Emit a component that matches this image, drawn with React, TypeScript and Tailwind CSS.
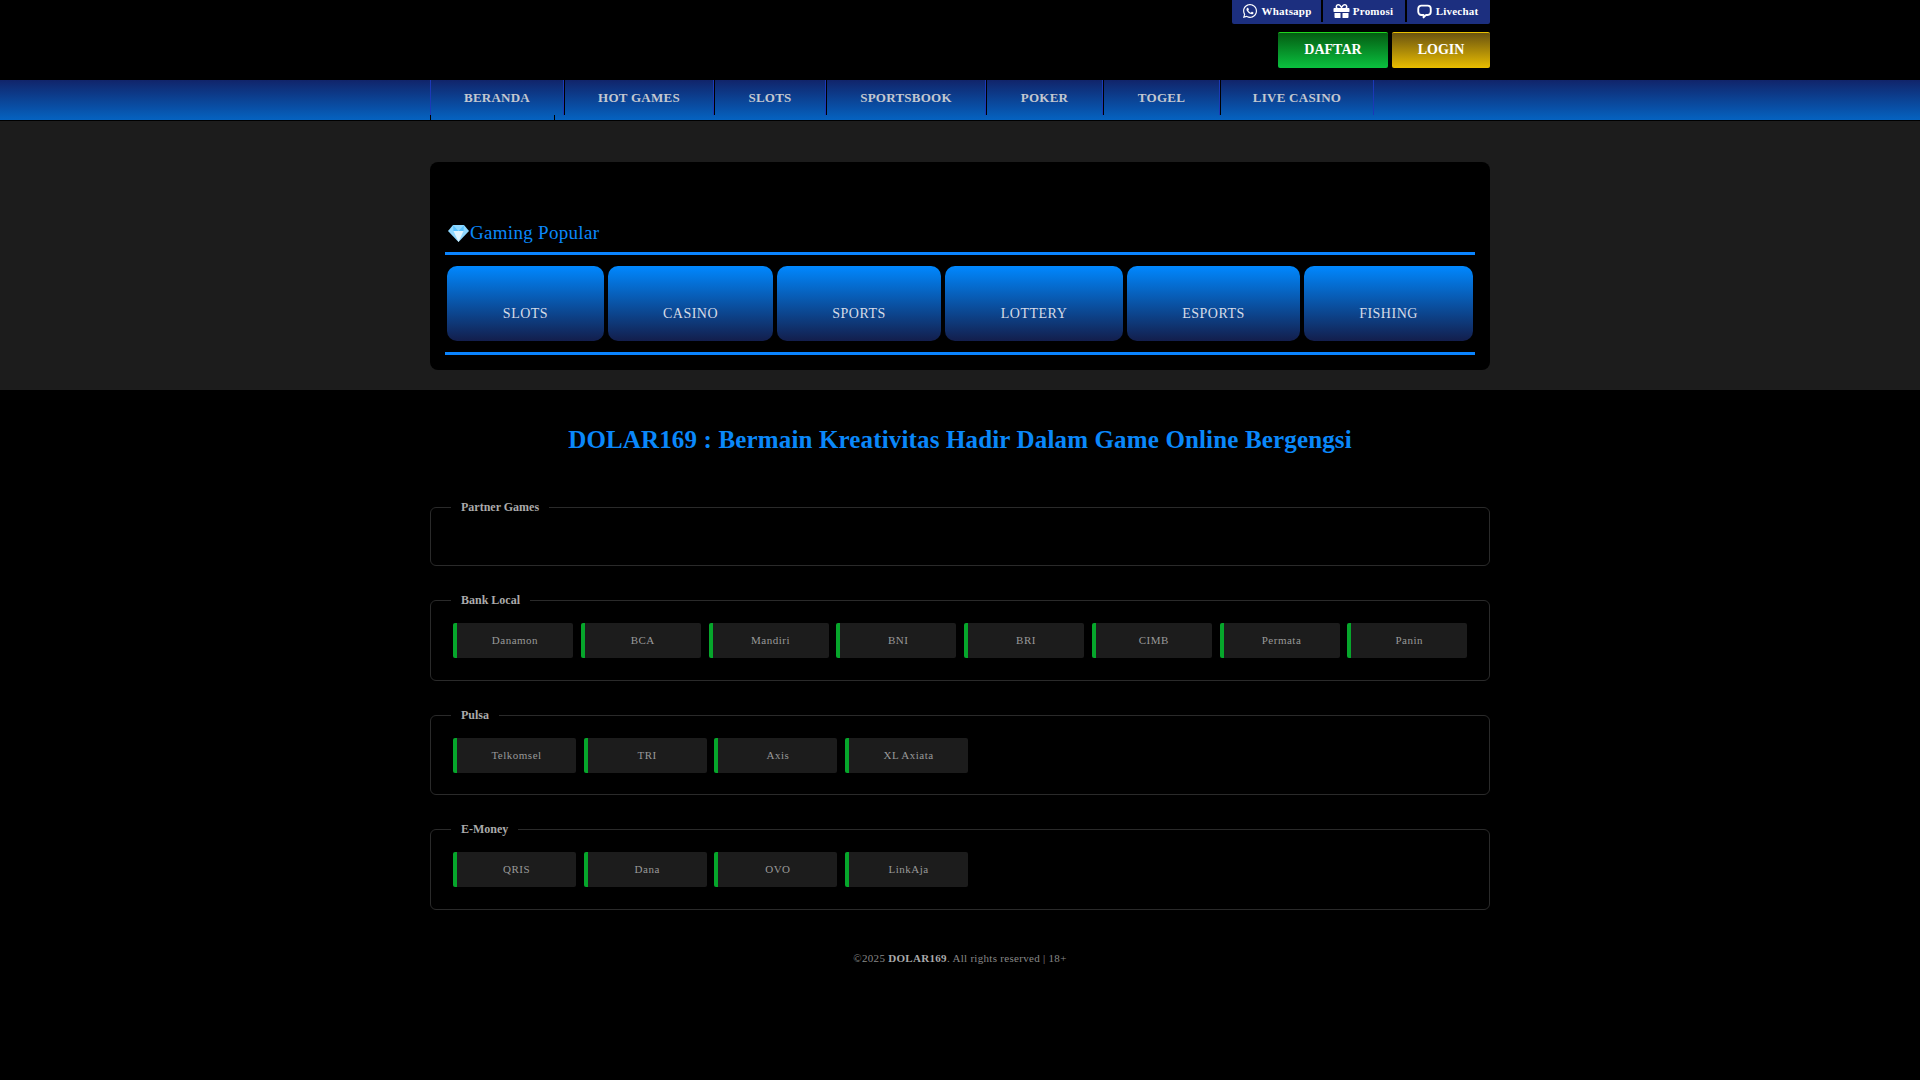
import React from "react";
import { FaWhatsapp, FaGift } from "react-icons/fa";

const nav = [
  { t: "BERANDA", w: "w-[134px]" },
  { t: "HOT GAMES", w: "w-[150px]" },
  { t: "SLOTS", w: "w-[112px]" },
  { t: "SPORTSBOOK", w: "w-[160px]" },
  { t: "POKER", w: "w-[117px]" },
  { t: "TOGEL", w: "w-[117px]" },
  { t: "LIVE CASINO", w: "w-[154px]" },
];
const games = [
  { t: "SLOTS", w: "w-[157px]" },
  { t: "CASINO", w: "w-[165px]" },
  { t: "SPORTS", w: "w-[164px]" },
  { t: "LOTTERY", w: "w-[178px]" },
  { t: "ESPORTS", w: "w-[173px]" },
  { t: "FISHING", w: "w-[169px]" },
];

function Pay({ t, wide }: { t: string; wide?: boolean }) {
  return (
    <div className={`${wide ? "w-[123px]" : "w-[120px]"} h-[35px] bg-[#1c1c1c] border-l-4 border-[#06a62b] rounded-[2px] flex items-center justify-center text-[11px] tracking-[0.5px] text-[#999999]`}>
      {t}
    </div>
  );
}

function Group({ title, items, wide, cls }: { title: string; items: string[]; wide?: boolean; cls: string }) {
  return (
    <fieldset className={`border border-[#2a2a2a] rounded-[6px] px-[22px] ${cls}`}>
      <legend className="ml-[-2px] px-[10px] text-[12px] font-bold tracking-[0px] text-[#aaaaaa] leading-[14px]">{title}</legend>
      {items.length > 0 && (
        <div className={`flex ${wide ? "gap-[7.7px]" : "gap-[7.75px]"} pt-[16px]`}>
          {items.map((i) => (
            <Pay key={i} t={i} wide={wide} />
          ))}
        </div>
      )}
    </fieldset>
  );
}

export default function App() {
  return (
    <div className="min-h-[1080px] bg-black" style={{ fontFamily: '"Liberation Serif", serif' }}>
      <header className="h-[80px]">
        <div className="w-[1060px] mx-auto flex flex-col items-end">
          <div className="flex h-[24px] pb-[2px] w-[258px] bg-[#1c2f7f] rounded-b-[2px] text-white text-[11px] font-bold tracking-[0.2px]">
            <div className="w-[91px] flex items-center justify-center gap-[4px] border-r-2 border-black">
              <FaWhatsapp className="w-[16px] h-[16px]" />
              Whatsapp
            </div>
            <div className="w-[84px] pr-[2px] flex items-center justify-center gap-[3px] border-r-2 border-black">
              <FaGift className="w-[17px] h-[16px]" />
              Promosi
            </div>
            <div className="flex-1 pr-[2px] flex items-center justify-center gap-[4px]">
              <svg width="15" height="15" viewBox="0 0 24 24" fill="none" stroke="white" strokeWidth="3" strokeLinejoin="round">
                <path d="M7 2.500h10a5 5 0 0 1 5 5v5a5 5 0 0 1-5 5h-2.500l-4 4v-4H7a5 5 0 0 1-5-5v-5a5 5 0 0 1 5-5z" />
              </svg>
              Livechat
            </div>
          </div>
          <div className="flex gap-[4px] mt-[8px] text-[14px] text-white">
            <div className="w-[110px] h-[36px] pb-[2px] rounded-[2px] border-t border-[#1fd51f] bg-[linear-gradient(180deg,#045c12,#0ac13f)] flex items-center justify-center font-bold">DAFTAR</div>
            <div className="w-[98px] h-[36px] pb-[2px] rounded-[2px] border-t border-[#e8c000] bg-[linear-gradient(180deg,#6a5310,#e9bd00)] flex items-center justify-center font-bold">LOGIN</div>
          </div>
        </div>
      </header>

      <nav className="h-[41px] border-b border-black bg-[linear-gradient(180deg,#11246a,#0563c1)]">
        <div className="w-[1060px] mx-auto flex h-[35px]">
          {nav.map((n, i) => (
            <div key={n.t} className={`${n.w} h-full flex items-center justify-center text-[13px] font-bold tracking-[0.25px] text-[#c4c8d0] border-r border-[#1c38b8] ${i === 0 ? "border-l border-l-[#1c38b8]" : "border-l border-l-black"} relative`}>
              {n.t}
              {i === 0 && (
                <>
                  <span className="absolute left-[-1px] top-[35px] w-px h-[5px] bg-black" />
                  <span className="absolute left-[123px] top-[35px] w-px h-[5px] bg-black" />
                </>
              )}
            </div>
          ))}
        </div>
      </nav>

      <section className="h-[269px] bg-[#1c1c1c] pt-[41px]">
        <div className="w-[1060px] h-[208px] mx-auto bg-black rounded-[8px] px-[15px] pt-[56px]">
          <div className="flex items-center h-[34px] pb-[3px] pl-[3px] text-[19px] tracking-[0.3px] text-[#0a88fa] gap-[1px]">
            <svg width="21" height="17" viewBox="0 0 21 17"><path d="M5 0h11l5 6-10.500 11L0 6z" fill="#8fd8ff" /><path d="M5.500 6h10L10.500 17z" fill="#e0f6ff" /><path d="M5 0l.5 6h10L16 0l-5.500 6z" fill="#58c2ff" /></svg>
            Gaming Popular
          </div>
          <div className="h-[3px] bg-[#0a84ff]" />
          <div className="flex gap-[4px] px-[2px] mt-[11px]">
            {games.map((g) => (
              <div key={g.t} className={`${g.w} h-[75px] rounded-[10px] bg-[linear-gradient(180deg,#0088ff,#131e4c)] flex items-end justify-center pb-[17px] text-[14px] tracking-[0.5px] text-[#d6dce8]`}>
                {g.t}
              </div>
            ))}
          </div>
          <div className="h-[3px] bg-[#0a84ff] mt-[11px]" />
        </div>
      </section>

      <main className="w-[1060px] mx-auto">
        <h1 className="text-center text-[25px] font-bold tracking-[0.15px] text-[#0a88fa] leading-[29px] pt-[35px]">DOLAR169 : Bermain Kreativitas Hadir Dalam Game Online Bergengsi</h1>
        <div className="flex flex-col mt-[46px] gap-[27px]">
          <Group title="Partner Games" items={[]} cls="h-[66px]" />
          <Group title="Bank Local" items={["Danamon", "BCA", "Mandiri", "BNI", "BRI", "CIMB", "Permata", "Panin"]} cls="h-[88px]" />
          <Group title="Pulsa" wide items={["Telkomsel", "TRI", "Axis", "XL Axiata"]} cls="h-[87px]" />
          <Group title="E-Money" wide items={["QRIS", "Dana", "OVO", "LinkAja"]} cls="h-[88px]" />
        </div>
        <p className="text-center text-[11px] tracking-[0.3px] text-[#888888] mt-[40px]">
          ©2025 <b className="text-[#aaaaaa]">DOLAR169</b>. All rights reserved | 18+
        </p>
      </main>
    </div>
  );
}
